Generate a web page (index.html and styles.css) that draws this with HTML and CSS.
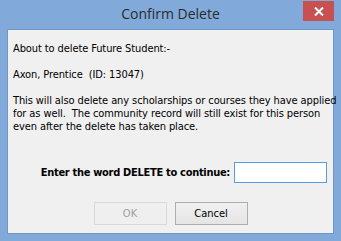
FILE: index.html
```html
<!DOCTYPE html>
<html lang="en">
<head>
    <meta charset="UTF-8">
    <title>Confirm Delete</title>
    <link rel="stylesheet" href="styles.css">
</head>
<body>
    <div class="window">
        <!-- Title bar -->
        <div class="titlebar">
            <span class="title">Confirm Delete</span>
            <button class="close" title="Close">
                <svg width="10" height="9" viewBox="0 0 10 9"><path d="M1 0.5 L9 8.5 M9 0.5 L1 8.5" stroke="#fff" stroke-width="2"/></svg>
            </button>
        </div>

        <!-- Dialog body -->
        <div class="client">
            <div class="message">
                <p>About to delete Future Student:-</p>
                <p>Axon, Prentice&nbsp; (ID: 13047)</p>
                <p>This will also delete any scholarships or courses they have applied<br>for as well.&nbsp; The community record will still exist for this person<br>even after the delete has taken place.</p>
            </div>

            <div class="confirm-row">
                <label for="confirmWord">Enter the word DELETE to continue:</label>
                <input type="text" id="confirmWord" autofocus>
            </div>

            <div class="buttons">
                <button class="button" disabled>OK</button>
                <button class="button">Cancel</button>
            </div>
        </div>
    </div>
</body>
</html>
```

FILE: styles.css
```css
body {
    margin: 0;
    padding: 0;
    background: #81a9d9;
}

.window {
    width: 341px;
    height: 241px;
    background: #81a9d9;
    display: flex;
    flex-direction: column;
}

.titlebar {
    position: relative;
    height: 29px;
    flex-shrink: 0;
    display: flex;
    justify-content: center;
    align-items: center;
}

.title {
    font-family: "Open Sans", sans-serif;
    font-size: 14px;
    color: #2b2b2b;
    padding-bottom: 2px;
}

.close {
    position: absolute;
    top: 1px;
    right: 7px;
    width: 31px;
    height: 20px;
    padding: 0;
    border: none;
    background: #c75050;
    display: flex;
    justify-content: center;
    align-items: center;
}

.client {
    margin: 0 7px 0 7px;
    height: 203px;
    flex-shrink: 0;
    border: 1px solid #7097c6;
    background: #f0f0f0;
    font-family: "DejaVu Sans Condensed", Tahoma, sans-serif;
    font-size: 11px;
    color: #000;
    display: flex;
    flex-direction: column;
}

.message {
    padding: 12px 0 0 5px;
    line-height: 13px;
    white-space: nowrap;
    letter-spacing: -0.1px;
}

.message p {
    margin: 0 0 13px 0;
}

.confirm-row {
    display: flex;
    justify-content: flex-end;
    align-items: center;
    gap: 4px;
    margin-top: 16px;
    padding-right: 6px;
}

.confirm-row label {
    font-weight: bold;
    letter-spacing: -0.3px;
    white-space: nowrap;
}

.confirm-row input {
    width: 88px;
    height: 19px;
    box-sizing: content-box;
    padding: 0 0 0 3px;
    border: 1px solid #569de5;
    outline: none;
    background: #fff;
    font: inherit;
}

.buttons {
    display: flex;
    justify-content: center;
    gap: 8px;
    margin-top: 19px;
}

.button {
    width: 73px;
    height: 23px;
    border: 1px solid #adadad;
    background: linear-gradient(#f0f0f0, #e5e5e5);
    font-family: "DejaVu Sans Condensed", Tahoma, sans-serif;
    font-size: 11px;
    color: #000;
    padding: 0;
}

.button:disabled {
    border-color: #d9d9d9;
    background: #efefef;
    color: #a0a0a0;
}
```
